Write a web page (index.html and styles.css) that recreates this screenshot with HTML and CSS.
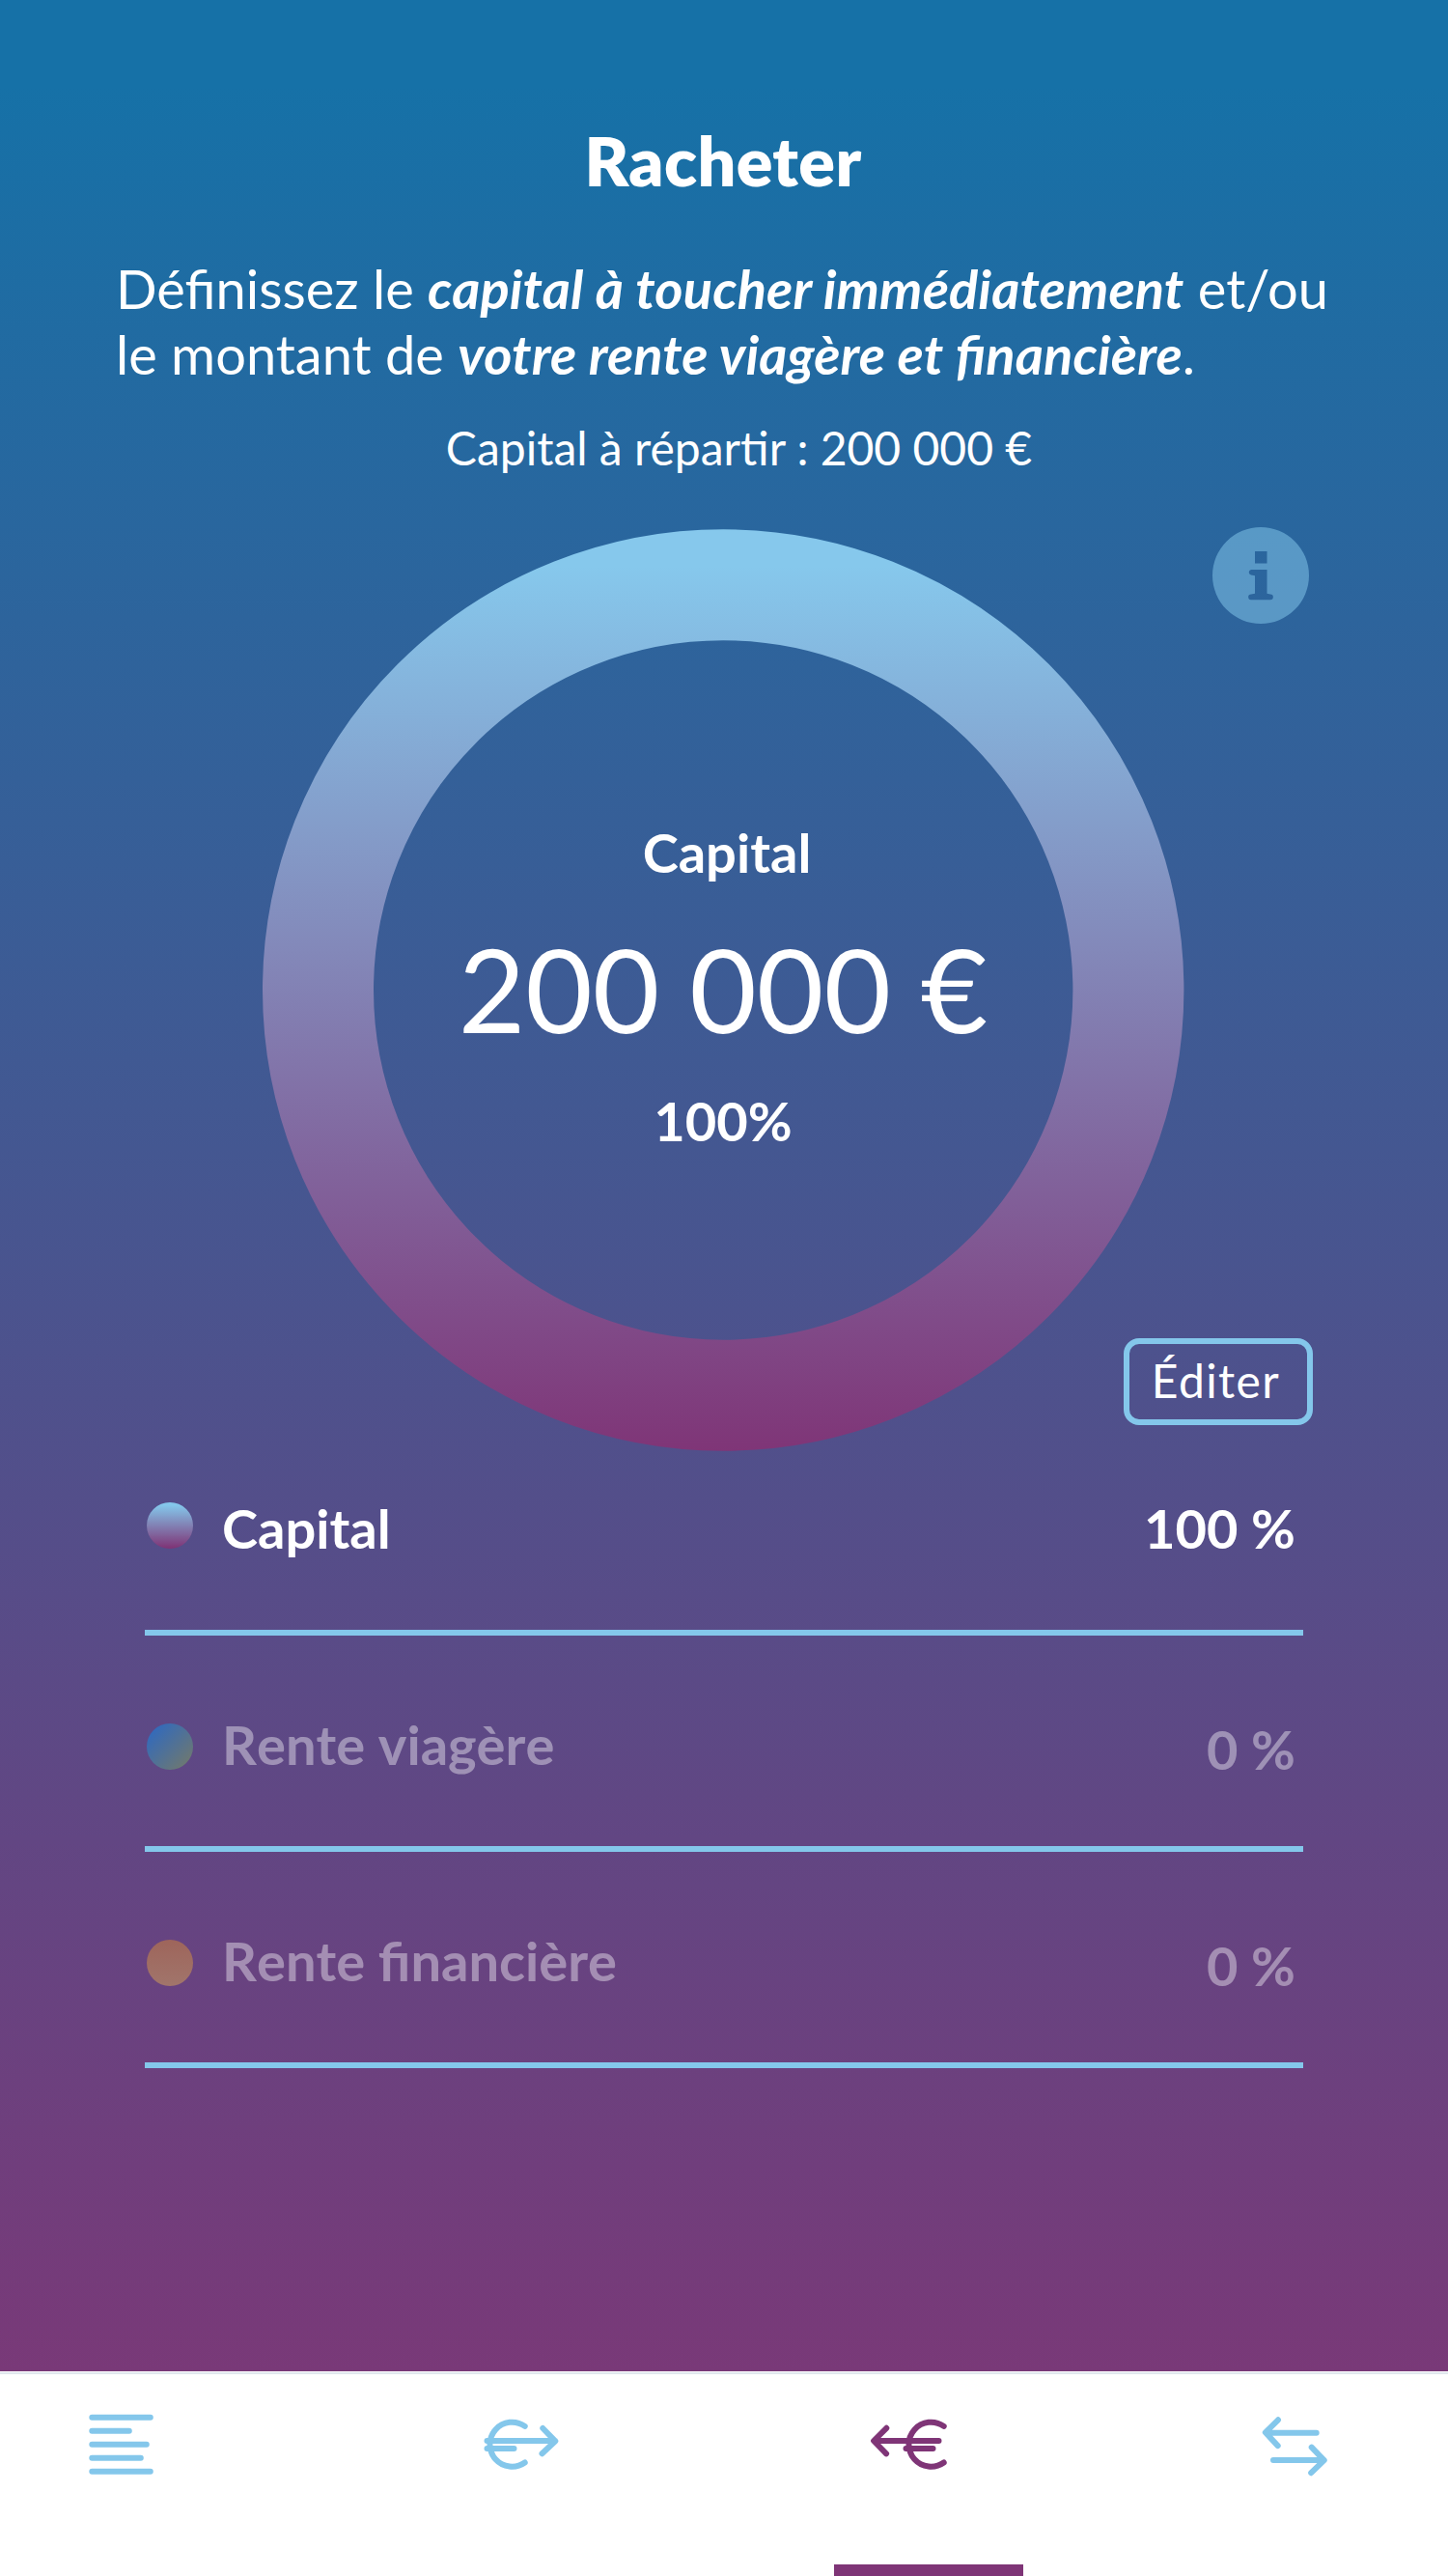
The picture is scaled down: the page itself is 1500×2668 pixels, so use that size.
FILE: index.html
```html
<!DOCTYPE html>
<html lang="fr">
<head>
<meta charset="utf-8">
<title>Racheter</title>
<link rel="stylesheet" href="styles.css">
</head>
<body>
<main class="screen">
  <h1 class="title">Racheter</h1>
  <p class="intro">Définissez le <em>capital à toucher immédiatement</em> et/ou<br>le montant de <em>votre rente viagère et financière</em>.</p>
  <p class="total">Capital à répartir : 200 000 €</p>

  <section class="chart">
    <div class="ring">
      <svg class="ring-shape" viewBox="0 0 955 955">
        <defs>
          <linearGradient id="ring-fill" x1="0" y1="0" x2="0" y2="955" gradientUnits="userSpaceOnUse">
            <stop offset="0.04" stop-color="#86c8ec"/>
            <stop offset="1" stop-color="#7f3577"/>
          </linearGradient>
        </defs>
        <circle cx="477.200" cy="477.500" r="419.700" fill="none" stroke="url(#ring-fill)" stroke-width="115"/>
      </svg>
      <div class="ring-text">
        <div class="ring-label">Capital</div>
        <div class="ring-amount">200 000 €</div>
        <div class="ring-share">100%</div>
      </div>
    </div>
    <div class="actions">
      <svg class="info" viewBox="0 0 100 100">
        <path fill="#84c7eb" fill-opacity=".52" fill-rule="evenodd" d="M50 0a50 50 0 1 1 0 100a50 50 0 1 1 0-100zM44 25v12.500h12.500v-12.500zM40 44a2.800 2.800 0 0 0 0 5.500l4 .8v18.500l-4 .7a2.800 2.800 0 0 0 0 5.700h20a2.800 2.800 0 0 0 0-5.700l-3.500-.7v-24.800z"/>
      </svg>
      <button class="edit">Éditer</button>
    </div>
  </section>

  <ul class="legend">
    <li class="row row-active"><span class="dot dot-capital"></span><span class="name">Capital</span><span class="value">100 %</span></li>
    <li class="row"><span class="dot dot-life"></span><span class="name">Rente viagère</span><span class="value">0 %</span></li>
    <li class="row"><span class="dot dot-finance"></span><span class="name">Rente financière</span><span class="value">0 %</span></li>
  </ul>
</main>

<nav class="tabs">
  <a class="tab"><svg class="icon" viewBox="28 2480 196 100"><path d="M95.300 2503.700h60.500M95.300 2517.700h38.500M95.300 2531.700h56.500M95.300 2545.700h50.500M95.300 2559.700h60.500"/></svg></a>
  <a class="tab"><svg class="icon" viewBox="442 2480 196 100"><path d="M543.700 2512.900A23 23 0 1 0 543.700 2550.500M504.500 2528H575M504.500 2535.900H532.500M562.300 2515l13 13.300l-13.800 13"/></svg></a>
  <a class="tab tab-active"><svg class="icon" viewBox="864 2480 196 100"><path d="M977.700 2512.900A23 23 0 1 0 977.700 2550.500M972.500 2528H906M938.500 2535.900H966.500M918.300 2514.800l-13.200 13.200l13 13.300"/></svg></a>
  <a class="tab"><svg class="icon" viewBox="1243 2480 196 100"><path d="M1363.700 2519.700H1312M1324 2506.300l-13.200 13l12.900 13.800M1319 2548H1371M1358.700 2534.700l13 13.500l-13.500 13"/></svg></a>
</nav>
</body>
</html>
```

FILE: styles.css
```css
* {
  box-sizing: border-box;
}

body {
  margin: 0;
  width: 1500px;
  height: 2668px;
  display: flex;
  flex-direction: column;
  font-family: Lato, "Open Sans", sans-serif;
  color: #fff;
  background: #fff;
  overflow: hidden;
}

.screen {
  height: 2456px;
  padding-top: 124px;
  background: linear-gradient(#1671a7 90px, #793978 100%);
}

.title {
  margin: 0 2px 57px 0;
  font-size: 70px;
  line-height: 84px;
  font-weight: 800;
  letter-spacing: .4px;
  text-align: center;
}

.intro {
  margin: 0 0 34px 120px;
  font-size: 56px;
  line-height: 68px;
  white-space: nowrap;
}

.intro em {
  font-weight: 700;
  letter-spacing: .12px;
  font-feature-settings: "liga" 1;
}

.total {
  margin: 0 0 53px 31px;
  font-size: 48px;
  line-height: 58px;
  text-align: center;
}

.chart {
  display: grid;
  height: 957px;
}

.ring,
.actions {
  grid-area: 1 / 1;
}

.ring {
  display: grid;
  width: 955px;
  height: 955px;
  margin: 2px 0 0 272px;
}

.ring-shape,
.ring-text {
  grid-area: 1 / 1;
}

.ring-shape {
  width: 955px;
  height: 955px;
}

.ring-text {
  padding: 301px 1px 0 0;
  text-align: center;
}

.ring-label,
.ring-share {
  font-size: 56px;
  line-height: 68px;
  font-weight: 700;
}

.ring-label {
  margin-left: 8px;
}

.ring-amount {
  margin: 35px 0 31px;
  font-size: 120px;
  line-height: 144px;
}

.actions {
  justify-self: end;
  display: flex;
  flex-direction: column;
  justify-content: space-between;
  align-items: flex-end;
  width: 196px;
  height: 930px;
  margin-right: 140px;
}

.info {
  width: 100px;
  height: 100px;
  margin-right: 4px;
}

.edit {
  width: 196px;
  height: 90px;
  padding: 0 5px 2px 0;
  border: 6px solid #84c7eb;
  border-radius: 16px;
  background: none;
  color: #fff;
  font: 400 48px/58px Lato, sans-serif;
  letter-spacing: 1.4px;
}

.legend {
  margin: 0 150px;
  padding: 0;
  list-style: none;
}

.row {
  display: flex;
  align-items: flex-end;
  height: 224px;
  padding: 0 8px 71px 2px;
  border-bottom: 6px solid #84c7eb;
  font-size: 56px;
  line-height: 68px;
  font-weight: 700;
}

.row-active {
  height: 191px;
}

.dot {
  width: 48px;
  height: 48px;
  margin: 0 30px 8px 0;
  border-radius: 50%;
}

.row-active .dot {
  margin-bottom: 13px;
}

.dot-capital {
  background: linear-gradient(#84c7eb 6%, #7f3577 98%);
}

.dot-life {
  background: linear-gradient(135deg, #326abc 12%, #6d7872 88%);
}

.dot-finance {
  background: linear-gradient(#9e655b, #a1756b);
}

.name,
.value {
  opacity: .4;
}

.name {
  font-kerning: none;
}

.value {
  margin: 0 0 -5px auto;
}

.row-active .name,
.row-active .value {
  opacity: 1;
}

.row-active .value {
  margin-bottom: 0;
}

.tabs {
  display: grid;
  grid-template-columns: 414px 422px 379px 196px;
  height: 212px;
  padding-left: 28px;
  border-top: 1px solid #fff;
  box-shadow: inset 0 2px #e0e7ed;
}

.tab {
  width: 196px;
  padding-top: 23px;
  color: #84c7eb;
}

.tab-active {
  color: #7f3577;
  border-bottom: 12px solid #7f3577;
}

.icon {
  display: block;
  width: 196px;
  height: 100px;
  fill: none;
  stroke: currentColor;
  stroke-width: 6;
  stroke-linecap: round;
  stroke-linejoin: round;
}
```
